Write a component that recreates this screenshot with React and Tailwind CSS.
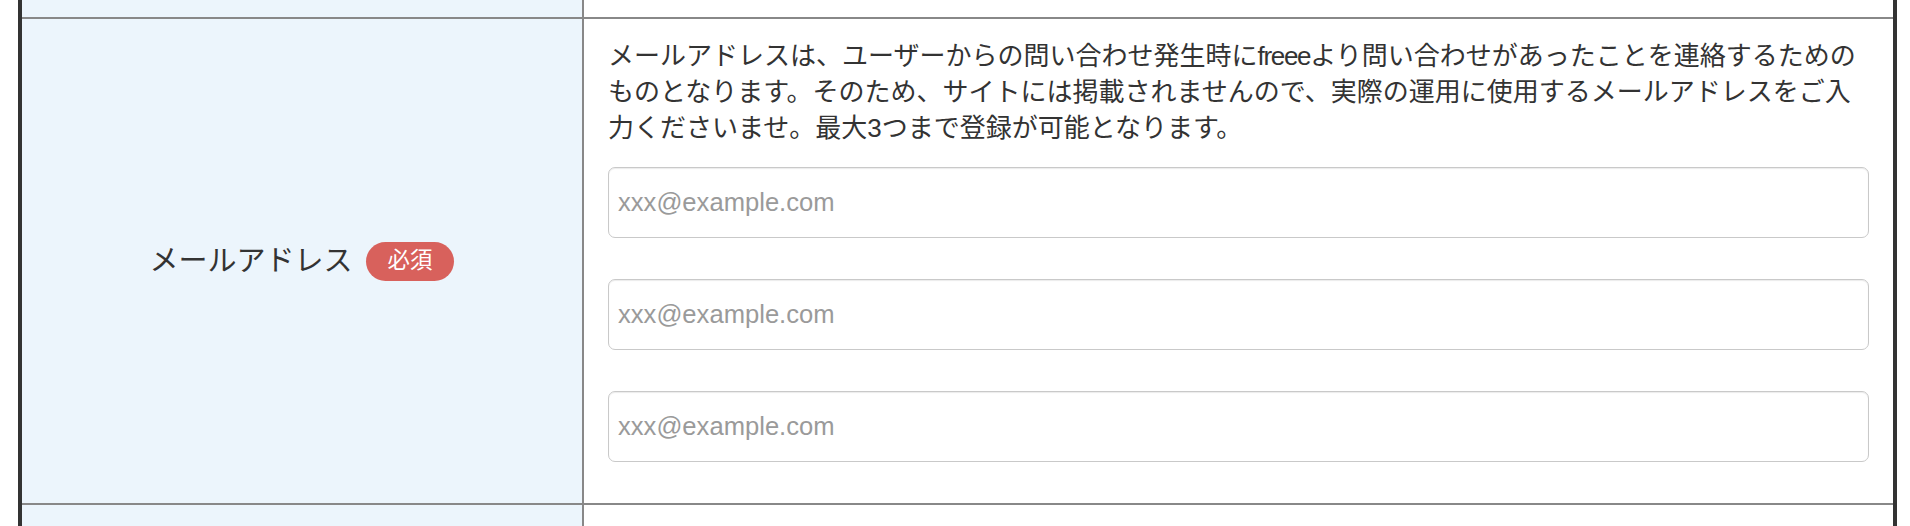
import React from 'react';

const FONT = { fontFamily: '"Liberation Sans", "Noto Sans CJK JP", sans-serif' };

const EmailInput = () => (
    <input
        type="email"
        placeholder="xxx@example.com"
        className="block h-[71px] w-full rounded-[7px] border border-[#c9c9c9] bg-white pl-[9px] text-[25.6px] text-[#333] shadow-[inset_0_1px_1px_rgba(0,0,0,0.08)] outline-none placeholder:text-[#9a9a9a]"
        style={FONT}
    />
);

const App = () => {
    return (
        <div className="h-[526px] w-[1910px] overflow-hidden bg-white text-[#333]" style={FONT}>
            <div className="ml-[18px] w-[1879px] border-x-4 border-[#333]">
                {/* previous row tail */}
                <div className="flex h-[17px]">
                    <div className="w-[562px] border-r-2 border-[#888] bg-[#ecf5fc]" />
                    <div className="flex-1 bg-white" />
                </div>

                {/* email row */}
                <div className="flex border-y-2 border-[#888]">
                    <div className="flex w-[562px] items-center justify-center gap-[13px] border-r-2 border-[#888] bg-[#ecf5fc]">
                        <span className="text-[29px] leading-none">メールアドレス</span>
                        <span className="flex h-[39px] items-center rounded-full bg-[#d8615c] px-[22px] text-[22.4px] leading-none text-white">
                            必須
                        </span>
                    </div>
                    <div className="flex-1 px-[24px] pt-[20px] pb-[41px]">
                        <p className="text-[26px] leading-[35.8px]">
                            メールアドレスは、ユーザーからの問い合わせ発生時に
                            <span className="tracking-[-0.05em]">freee</span>
                            より問い合わせがあったことを連絡するための
                            <br />
                            ものとなります。そのため、サイトには掲載されませんので、実際の運用に使用するメールアドレスをご入
                            <br />
                            力くださいませ。最大3つまで登録が可能となります。
                        </p>
                        <div className="mt-[21px] flex flex-col gap-[41px]">
                            <EmailInput />
                            <EmailInput />
                            <EmailInput />
                        </div>
                    </div>
                </div>

                {/* next row head */}
                <div className="flex h-[21px]">
                    <div className="w-[562px] border-r-2 border-[#888] bg-[#ecf5fc]" />
                    <div className="flex-1 bg-white" />
                </div>
            </div>
        </div>
    );
};

export default App;
